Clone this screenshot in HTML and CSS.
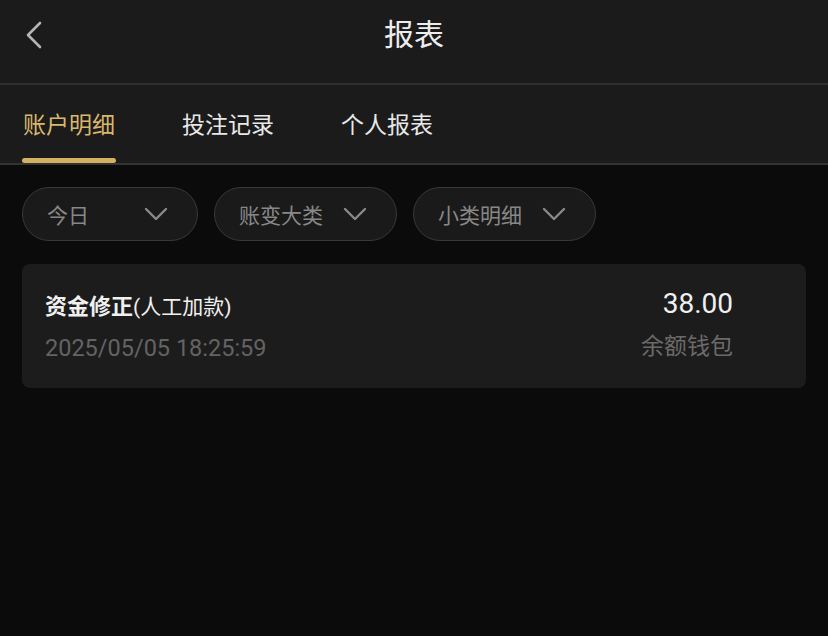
FILE: index.html
```html
<!DOCTYPE html>
<html lang="zh-CN">
<head>
    <meta charset="UTF-8">
    <meta name="viewport" content="width=device-width, initial-scale=1.0">
    <title>报表</title>
    <link rel="stylesheet" href="styles.css">
</head>
<body>
    <header class="top-bar">
        <a class="back-btn" href="#">
            <svg width="20" height="28" viewBox="0 0 20 28">
                <polyline points="16,2 4,14 16,26" fill="none" stroke="#b5b5b5" stroke-width="2.6" stroke-linecap="round" stroke-linejoin="round"/>
            </svg>
        </a>
        <h1 class="page-title">报表</h1>
        <span></span>
    </header>

    <nav class="tabs">
        <div class="tab active"><span>账户明细</span><i class="tab-bar"></i></div>
        <div class="tab"><span>投注记录</span><i class="tab-bar"></i></div>
        <div class="tab"><span>个人报表</span><i class="tab-bar"></i></div>
    </nav>

    <div class="filters">
        <div class="filter filter-day">
            <span>今日</span>
            <svg width="24" height="16" viewBox="0 0 24 16"><polyline points="2,3 12,13 22,3" fill="none" stroke="#8a8a8a" stroke-width="2.4" stroke-linecap="round" stroke-linejoin="round"/></svg>
        </div>
        <div class="filter">
            <span>账变大类</span>
            <svg width="24" height="16" viewBox="0 0 24 16"><polyline points="2,3 12,13 22,3" fill="none" stroke="#8a8a8a" stroke-width="2.4" stroke-linecap="round" stroke-linejoin="round"/></svg>
        </div>
        <div class="filter">
            <span>小类明细</span>
            <svg width="24" height="16" viewBox="0 0 24 16"><polyline points="2,3 12,13 22,3" fill="none" stroke="#8a8a8a" stroke-width="2.4" stroke-linecap="round" stroke-linejoin="round"/></svg>
        </div>
    </div>

    <div class="record">
        <div class="record-left">
            <div class="record-title"><b>资金修正</b><span>(人工加款)</span></div>
            <div class="record-time">2025/05/05 18:25:59</div>
        </div>
        <div class="record-right">
            <div class="record-amount">38.00</div>
            <div class="record-wallet">余额钱包</div>
        </div>
    </div>
</body>
</html>
```

FILE: styles.css
```css
body {
    margin: 0;
    height: 636px;
    background-color: #0b0b0b;
    font-family: Roboto, "Noto Sans CJK SC", sans-serif;
    color: #ececec;
}
.top-bar {
    display: grid;
    grid-template-columns: 1fr auto 1fr;
    align-items: center;
    box-sizing: border-box;
    height: 85px;
    padding: 0 24px 14px;
    background-color: #1b1b1b;
    border-bottom: 2px solid #2f2f2f;
}
.back-btn {
    display: flex;
    align-items: center;
    width: 30px;
}
.page-title {
    margin: 0;
    font-size: 30px;
    line-height: 40px;
    font-weight: normal;
    color: #ededed;
}
.tabs {
    display: flex;
    gap: 65px;
    height: 78px;
    padding: 0 22px;
    background-color: #1b1b1b;
    border-bottom: 2px solid #333;
}
.tab {
    display: flex;
    flex-direction: column;
    justify-content: flex-end;
    align-items: center;
    gap: 17px;
    font-size: 23px;
    line-height: 30px;
    color: #e8e8e8;
}
.tab-bar {
    display: block;
    width: 94px;
    height: 5px;
    border-radius: 3px;
}
.tab.active {
    color: #d9b86c;
}
.tab.active .tab-bar {
    background-color: #d4b063;
}
.filters {
    display: flex;
    gap: 16px;
    padding: 22px 22px 0;
}
.filter {
    display: flex;
    justify-content: space-between;
    align-items: center;
    box-sizing: border-box;
    width: 183px;
    height: 54px;
    padding: 0 29px 0 24px;
    border: 1.5px solid #383838;
    border-radius: 27px;
    background-color: #1a1a1a;
    font-size: 21px;
    color: #888;
}
.filter-day {
    width: 176px;
}
.record {
    display: flex;
    justify-content: space-between;
    align-items: flex-start;
    box-sizing: border-box;
    height: 124px;
    margin: 23px 22px 0;
    padding: 27px 73px 0 23px;
    border-radius: 8px;
    background-color: #1c1c1c;
}
.record-left {
    display: flex;
    flex-direction: column;
    gap: 7px;
}
.record-title {
    line-height: 32px;
    color: #f0f0f0;
}
.record-title b {
    font-size: 22px;
}
.record-title span {
    font-size: 21px;
}
.record-time {
    font-size: 23.5px;
    line-height: 32px;
    color: #636363;
}
.record-right {
    display: flex;
    flex-direction: column;
    align-items: flex-end;
    gap: 14px;
}
.record-amount {
    font-size: 28px;
    line-height: 26px;
    color: #f0f0f0;
}
.record-wallet {
    font-size: 23px;
    line-height: 32px;
    color: #6a6a6a;
}
```
